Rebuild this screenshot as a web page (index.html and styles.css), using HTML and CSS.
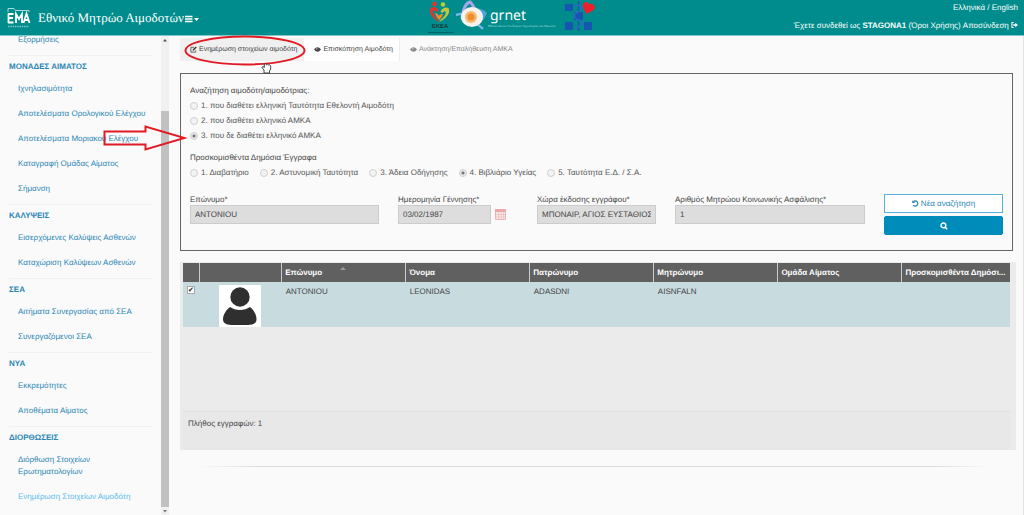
FILE: index.html
```html
<!DOCTYPE html>
<html lang="el">
<head>
<meta charset="utf-8">
<title>Εθνικό Μητρώο Αιμοδοτών</title>
<link rel="stylesheet" href="styles.css">
</head>
<body>
<header class="topbar">
  <div class="brand">
    <svg class="brand-logo" viewBox="0 0 24 24" aria-hidden="true">
      <path d="M1 5V1.500h6l1.500 2H22V5" fill="none" stroke="#a5dada" stroke-width="1"/>
      <path d="M1.500 6.500v9.500M1 7h5.500M1 11h5M1 15.500h5.500M9 16V7l3 5 3-5v9M16.500 16l3-9.500 3 9.500M17 13h5" fill="none" stroke="#fff" stroke-width="1.800"/>
      <path d="M1 19.500h21" stroke="#7cc4c4" stroke-width="1.500" stroke-dasharray="1.500 .8"/>
    </svg>
    <h1 class="brand-title">Εθνικό Μητρώο Αιμοδοτών</h1>
    <button class="menu-button" type="button" aria-label="Μενού">
      <svg viewBox="0 0 14 8" width="14" height="8"><path d="M0 1.500h7.500M0 4h7.500M0 6.500h7.500" stroke="#fff" stroke-width="1.500"/><path d="M9 3h5l-2.500 3z" fill="#fff"/></svg>
    </button>
  </div>
  <div class="partners">
    <svg class="logo-eked" viewBox="0 0 26 34" role="img" aria-label="ΕΚΕΑ">
      <circle cx="6.500" cy="4" r="2.300" fill="#e5332a"/><circle cx="15" cy="4.500" r="2.300" fill="#b9cc3a"/>
      <path d="M11 22C4 18 0 12 2.500 8c3-2 7-1 8 3l-2 1c-2-2.500-4-2-3.500.5 .8 3 3 5 6 9.500z" fill="#e5332a"/>
      <path d="M11 22c7-3 12-9 9.500-14-3-1.500-7 0-8 4l2 1c2-3 4-1.500 3 1-1 3-4 4-6.500 8z" fill="#c3c53a"/>
      <path d="M7 13c2 0 3 1 4 3 1-2 2-2 4-2-1 3-2 4-4 6-2-2-3-4-4-7z" fill="#f08a2c"/>
      <text x="12" y="28" class="eked-text">ΕΚΕΑ</text>
      <path d="M0 32.500h25" stroke="#045c5c" stroke-width="1" stroke-dasharray="2 .6"/>
    </svg>
    <div class="grnet">
      <svg class="grnet-mark" viewBox="0 0 34 32" aria-hidden="true">
        <path d="M8 19C9 9 12 3 16 2c4 3 6 9 8 17" fill="none" stroke="#a9a5e8" stroke-width="3"/>
        <path d="M2 15c6-2 11-2 15 3s9 8 12 11" fill="none" stroke="#78b8e8" stroke-width="2.400"/>
        <path d="M15 9c7-2 15 0 18 4-2 6-6 9-12 12" fill="#4da3d8"/>
        <ellipse cx="18" cy="17" rx="11" ry="10" fill="#f6f3ee"/>
        <circle cx="17" cy="17" r="6" fill="#f6ba70"/><circle cx="17" cy="17" r="3.500" fill="#ee8d2f"/>
      </svg>
      <div class="grnet-words"><span class="grnet-name">grnet</span><span class="grnet-sub">Εθνικό Δίκτυο Υποδομών Τεχνολογίας και Έρευνας</span></div>
    </div>
    <svg class="logo-cross" viewBox="0 0 32 32" aria-hidden="true">
      <path d="M1 4h8v7H1zM10 12h9v8h-9zM1 22h8v8H1zM20 22h8v8h-8z" fill="#1655b0"/>
      <path d="M14.500 1v30" stroke="#1655b0" stroke-width="1.500"/>
      <path d="M10 5c10 0 9 5 4 7s-5 6 1 8 3 6-3 8" fill="none" stroke="#2a6cc4" stroke-width="1.500"/>
      <path d="M19 4c2-3 5-2 6 0 3-1 6 1 6 4 0 2-5 4-9 6-1-4-4-7-3-10z" fill="#f01f2d"/>
    </svg>
  </div>
  <div class="account">
    <div><a href="#">Ελληνικά</a> / <a href="#">English</a></div>
    <div>Έχετε συνδεθεί ως <b>STAGONA1</b> <a href="#">(Όροι Χρήσης)</a> <a href="#">Αποσύνδεση
      <svg viewBox="0 0 8 7" width="7" height="6"><path d="M3 .7H1v5.600h2" fill="none" stroke="#fff" stroke-width="1.200"/><path d="M2.500 2.500H5V.8l3 2.700-3 2.700V4.500H2.500z" fill="#fff"/></svg></a></div>
  </div>
</header>

<div class="layout">
  <nav class="sidebar">
    <div class="menu">
      <section class="group"><a href="#">Εξορμήσεις</a></section>
      <section class="group"><h2>ΜΟΝΑΔΕΣ ΑΙΜΑΤΟΣ</h2>
        <a href="#">Ιχνηλασιμότητα</a><a href="#">Αποτελέσματα Ορολογικού Ελέγχου</a><a href="#">Αποτελέσματα Μοριακού Ελέγχου</a><a href="#">Καταγραφή Ομάδας Αίματος</a><a href="#">Σήμανση</a></section>
      <section class="group"><h2>ΚΑΛΥΨΕΙΣ</h2>
        <a href="#">Εισερχόμενες Καλύψεις Ασθενών</a><a href="#">Καταχώριση Καλύψεων Ασθενών</a></section>
      <section class="group"><h2>ΣΕΑ</h2>
        <a href="#">Αιτήματα Συνεργασίας από ΣΕΑ</a><a href="#">Συνεργαζόμενοι ΣΕΑ</a></section>
      <section class="group"><h2>ΝΥΑ</h2>
        <a href="#">Εκκρεμότητες</a><a href="#">Αποθέματα Αίματος</a></section>
      <section class="group"><h2>ΔΙΟΡΘΩΣΕΙΣ</h2>
        <a href="#">Διόρθωση Στοιχείων<br>Ερωτηματολογίων</a><a href="#" class="current">Ενημέρωση Στοιχείων Αιμοδότη</a></section>
    </div>
    <div class="scrollbar" aria-hidden="true">
      <svg viewBox="0 0 8 8" width="8" height="8"><path d="M2 5.500h4L4 3z" fill="#555"/></svg>
      <span class="scroll-thumb"></span>
      <svg viewBox="0 0 8 8" width="8" height="8"><path d="M2 3h4L4 5.500z" fill="#777"/></svg>
    </div>
  </nav>

  <main class="content">
    <div class="tabs">
      <button type="button" class="tab active"><svg viewBox="0 0 8 8" width="7" height="7"><path d="M4.500 1.500H1v5.500h5.500V5" fill="none" stroke="#444" stroke-width=".9"/><path d="M3 5.300l.3-1.500L6.600.5l1.100 1.100-3.200 3.300z" fill="#333"/></svg>Ενημέρωση στοιχείων αιμοδότη</button>
      <button type="button" class="tab"><svg viewBox="0 0 8 8" width="7" height="7"><path d="M0 4q4-5 8 0-4 5-8 0z" fill="#444"/><circle cx="3.300" cy="3.200" r=".7" fill="#fff"/></svg>Επισκόπηση Αιμοδότη</button>
      <button type="button" class="tab muted"><svg viewBox="0 0 8 8" width="7" height="7"><path d="M0 4q4-5 8 0-4 5-8 0z" fill="#888"/><circle cx="3.300" cy="3.200" r=".7" fill="#fff"/></svg>Ανάκτηση/Επαλήθευση ΑΜΚΑ</button>
    </div>

    <form class="search">
      <fieldset class="choices">
        <legend>Αναζήτηση αιμοδότη/αιμοδότριας:</legend>
        <label><input type="radio" name="kind" disabled>1. που διαθέτει ελληνική Ταυτότητα Εθελοντή Αιμοδότη</label>
        <label><input type="radio" name="kind" disabled>2. που διαθέτει ελληνικό ΑΜΚΑ</label>
        <label><input type="radio" name="kind" disabled checked>3. που δε διαθέτει ελληνικό ΑΜΚΑ</label>
      </fieldset>
      <fieldset class="choices inline">
        <legend>Προσκομισθέντα Δημόσια Έγγραφα</legend>
        <div class="choice-row">
        <label><input type="radio" name="doc" disabled>1. Διαβατήριο</label>
        <label><input type="radio" name="doc" disabled>2. Αστυνομική Ταυτότητα</label>
        <label><input type="radio" name="doc" disabled>3. Άδεια Οδήγησης</label>
        <label><input type="radio" name="doc" disabled checked>4. Βιβλιάριο Υγείας</label>
        <label><input type="radio" name="doc" disabled>5. Ταυτότητα Ε.Δ. / Σ.Α.</label>
        </div>
      </fieldset>
      <div class="fields">
        <div class="field"><label for="surname">Επώνυμο*</label><input id="surname" type="text" value="ANTONIOU" readonly></div>
        <div class="field"><label for="birth">Ημερομηνία Γέννησης*</label>
          <div class="date"><input id="birth" type="text" value="03/02/1987" readonly>
          <svg viewBox="0 0 11 11" width="11" height="11" aria-hidden="true"><path d="M.5.500h10v10H.5z" fill="#fbeaea" stroke="#e8b4b4"/><path d="M0 0h11v3H0z" fill="#eda9a9"/><path d="M1 5.500h9M1 8h9M3.500 3v7.500M6 3v7.500M8.500 3v7.500" stroke="#ecc0c0" stroke-width=".8"/></svg></div></div>
        <div class="field"><label for="country">Χώρα έκδοσης εγγράφου*</label><select id="country"><option>ΜΠΟΝΑΙΡ, ΑΓΙΟΣ ΕΥΣΤΑΘΙΟΣ ΚΑΙ ΣΑΜΠΑ</option></select></div>
        <div class="field"><label for="ssn">Αριθμός Μητρώου Κοινωνικής Ασφάλισης*</label><input id="ssn" type="text" value="1" readonly></div>
        <div class="actions">
          <button type="button" class="btn outline"><svg viewBox="0 0 8 8" width="7" height="7"><path d="M1.500 1.800a3 3 0 1 1-.3 4" fill="none" stroke="#2484b4" stroke-width="1.300"/><path d="M.3.300v3.200h3.200z" fill="#2484b4"/></svg>Νέα αναζήτηση</button>
          <button type="submit" class="btn solid" aria-label="Αναζήτηση"><svg viewBox="0 0 8 8" width="8" height="8"><circle cx="3.400" cy="3.400" r="2.400" fill="none" stroke="#fff" stroke-width="1.400"/><path d="M5.200 5.200l2 2" stroke="#fff" stroke-width="1.600"/></svg></button>
        </div>
      </div>
    </form>

    <section class="results">
      <div class="grid-body">
      <table>
        <colgroup><col class="c-check"><col class="c-photo"><col class="c-text"><col class="c-text"><col class="c-text"><col class="c-text"><col class="c-text"><col class="c-last"></colgroup>
        <thead><tr><th></th><th></th><th><span class="sorted">Επώνυμο<svg viewBox="0 0 6 3" width="6" height="3"><path d="M0 3h6L3 0z" fill="#999"/></svg></span></th><th>Όνομα</th><th>Πατρώνυμο</th><th>Μητρώνυμο</th><th>Ομάδα Αίματος</th><th>Προσκομισθέντα Δημόσι...</th></tr></thead>
        <tbody><tr>
          <td class="check"><input type="checkbox" checked aria-label="Επιλογή"></td>
          <td class="photo"><svg viewBox="0 0 42 42" width="42" height="42" role="img" aria-label="Αιμοδότης"><path fill="#fff" d="M0 0h42v42H0z"/><circle cx="21" cy="12" r="9.700" fill="#2f2f2f"/><path d="M11 22c5.500 4 14.500 4 20 0 4 3 6.500 8 6.500 12.500S33 40 28 40H14c-5 0-10-1-10-5.500S7 25 11 22z" fill="#2f2f2f"/></svg></td>
          <td>ANTONIOU</td><td>LEONIDAS</td><td>ADASDNI</td><td>AISNFALN</td><td></td><td></td>
        </tr></tbody>
      </table>
      </div>
      <footer class="count">Πλήθος εγγραφών: 1</footer>
    </section>
    <hr class="divider">
  </main>
</div>

<svg class="mark mark-ellipse" viewBox="0 0 122 31" aria-hidden="true"><ellipse cx="61" cy="15.500" rx="59.500" ry="14" fill="none" stroke="#e01b24" stroke-width="2"/></svg>
<svg class="mark mark-arrow" viewBox="0 0 84 28" aria-hidden="true"><path d="M1.500 7.500h41v-5L81.500 14l-39 11.500v-5h-41z" fill="none" stroke="#e01b24" stroke-width="2"/></svg>
<svg class="mark mark-hand" viewBox="0 0 11 12" aria-hidden="true"><path d="M3 11V8L.8 5.300 2 4.500l1.300 1V2l1.200-.5L5.500 3l1-.8 1 .8 1-.3 1.200 1.300v3L8.500 9v2z" fill="#fff" stroke="#333" stroke-width=".9"/></svg>
</body>
</html>
```

FILE: styles.css
```css
* { box-sizing: border-box; }
body {
  margin: 0;
  height: 100vh;
  display: flex;
  flex-direction: column;
  overflow: hidden;
  background: #fafafa;
  color: #444;
  font: 8px/12px "Liberation Sans", Arial, sans-serif;
  text-rendering: geometricPrecision;
}
button, input, select { font: inherit; color: inherit; margin: 0; text-rendering: inherit; }
a { color: inherit; text-decoration: none; }

.topbar {
  flex: none;
  height: 36px;
  display: grid;
  grid-template-columns: 1fr auto 1fr;
  background: #008c8c;
  border-bottom: 1px solid #7cc9c9;
  color: #fff;
}
.brand { display: flex; align-items: center; padding-left: 7px; }
.brand-logo { width: 24px; height: 24px; margin-top: 3px; }
.brand-title {
  margin: 0 1px 0 7px;
  font: 13px/18px "Liberation Serif", "Times New Roman", serif;
  white-space: nowrap;
}
.menu-button { display: flex; padding: 2px 0 0; border: 0; background: none; }
.partners { display: flex; align-items: flex-start; }
.logo-eked { width: 26px; height: 34px; }
.eked-text { font: bold 6px "Liberation Sans", sans-serif; fill: #123c3c; text-anchor: middle; }
.grnet { display: flex; }
.grnet-mark { width: 34px; height: 32px; }
.grnet-words { width: 76px; padding-top: 7px; display: flex; flex-direction: column; }
.grnet-name { padding-left: 2px; font: 14px/17px "Noto Sans", sans-serif; }
.grnet-sub { font-size: 3px; line-height: 5px; color: #a4dada; white-space: nowrap; }
.logo-cross { width: 32px; height: 32px; }
.account {
  display: flex;
  flex-direction: column;
  gap: 6px;
  padding: 2px 6px 0 0;
  text-align: right;
}

.layout { flex: 1; min-height: 0; display: flex; }
.sidebar { flex: none; width: 169px; display: flex; overflow: hidden; }
.menu { flex: 1; padding: 0 8px 0 9px; color: #2b86b5; }
.group {
  display: flex;
  flex-direction: column;
  gap: 13px;
  padding: 5px 0 9px;
  border-bottom: 1px solid #f0f0f0;
}
.group:first-child { padding-top: 0; margin-top: -2px; }
.group:last-child { border: 0; }
.group h2 { margin: 0 0 -3px; font-size: 8px; line-height: 12px; }
.group a { padding-left: 9px; }
.group .current { color: #5bbcec; }
.scrollbar {
  width: 8px;
  display: flex;
  flex-direction: column;
  justify-content: space-between;
  background: #f1f1f1;
}
.scroll-thumb { height: 396px; margin-top: auto; background: #c1c1c1; }

.content { flex: 1; min-width: 0; padding: 2px 7px 0 11px; border-right: 1px solid #e4e4e4; }
.tabs { display: flex; margin-bottom: 12px; }
.tab {
  display: flex;
  align-items: center;
  gap: 2px;
  height: 23px;
  padding: 0 6px 0 10px;
  border: 0;
  border-right: 1px solid #eee;
  background: #fff;
  font-size: 7px;
  white-space: nowrap;
}
.tab.active { padding: 0 6px 0 10px; background: #f0f0f0; }
.tab.muted { border: 0; background: #fafafa; color: #888; }

.search { margin-right: 3px; padding: 9px 9px 15px; border: 1px solid #666; }
.choices { margin: 0 0 7px; padding: 0; border: 0; line-height: 15px; }
.choices.inline { margin-bottom: 14px; }
.choices legend { padding: 0; }
.choices label { display: flex; align-items: center; gap: 3px; color: #555; }
.choices input {
  appearance: none;
  width: 8px;
  height: 8px;
  border: 1px solid #d0d0d0;
  border-radius: 50%;
  background: #f3f3f3;
}
.choices input:checked { background: radial-gradient(circle, #777 0 1px, #e8e8e8 2px); }
.choice-row { display: flex; gap: 11px; }
.fields { display: grid; grid-template-columns: 189fr 120fr 119fr 190fr 119fr; gap: 19px; }
.field { min-width: 0; display: flex; flex-direction: column; line-height: 11px; white-space: nowrap; }
.field input, .field select {
  appearance: none;
  width: 100%;
  min-width: 0;
  height: 19px;
  padding: 0 4px;
  border: 1px solid #ccc;
  border-radius: 0;
  background: #ddd;
}
.date { display: flex; align-items: center; gap: 4px; }
.date input { flex: 1; }
.date svg { flex: none; margin-right: 12px; }
.actions { display: flex; flex-direction: column; gap: 3px; }
.btn {
  height: 19px;
  display: flex;
  align-items: center;
  justify-content: center;
  gap: 2px;
  padding: 0;
  border: 1px solid #58b1d6;
  background: #fff;
  color: #2484b4;
}
.btn.solid { border-color: #008cba; border-radius: 2px; background: #008cba; }

.results { margin-top: 11px; padding: 1px 6px 0 3px; background: #ebebeb; }
.grid-body { height: 149px; border-bottom: 1px solid #e0e0e0; }
table { width: 100%; border-collapse: collapse; table-layout: fixed; }
.c-check { width: 16px; }
.c-photo { width: 10%; }
.c-text { width: 15%; }
th {
  height: 19px;
  padding: 0 3px;
  border-left: 1px solid #ccc;
  background: #606060;
  color: #fff;
  text-align: left;
  white-space: nowrap;
}
th:first-child { border-left: 0; }
.sorted { display: flex; justify-content: space-between; padding-right: 56px; }
td { height: 45px; padding: 4px; background: #c8dce0; vertical-align: top; }
.check { padding: 4px; }
.check input { display: block; width: 8px; height: 8px; appearance: none; border: 1px solid #aaa; background: #fff; }
.check input::after { content: "✔"; display: block; font: 7px/6px "DejaVu Sans", sans-serif; color: #222; }
.photo { padding: 3px 0 0; text-align: center; }
.photo svg { display: block; margin: 0 auto; }
.count { height: 38px; padding: 6px 5px; background: #e8e8e8; }
.divider {
  height: 1px;
  margin: 16px 25px 0 20px;
  border: 0;
  background: linear-gradient(90deg, transparent, #ddd 7%, #ddd 93%, transparent);
}

/* Annotations drawn over the page */
.mark { position: absolute; pointer-events: none; }
.mark-ellipse { left: 184px; top: 35px; width: 122px; height: 31px; }
.mark-arrow { left: 103px; top: 124px; width: 84px; height: 28px; }
.mark-hand { left: 261px; top: 62px; width: 11px; height: 12px; }
```
